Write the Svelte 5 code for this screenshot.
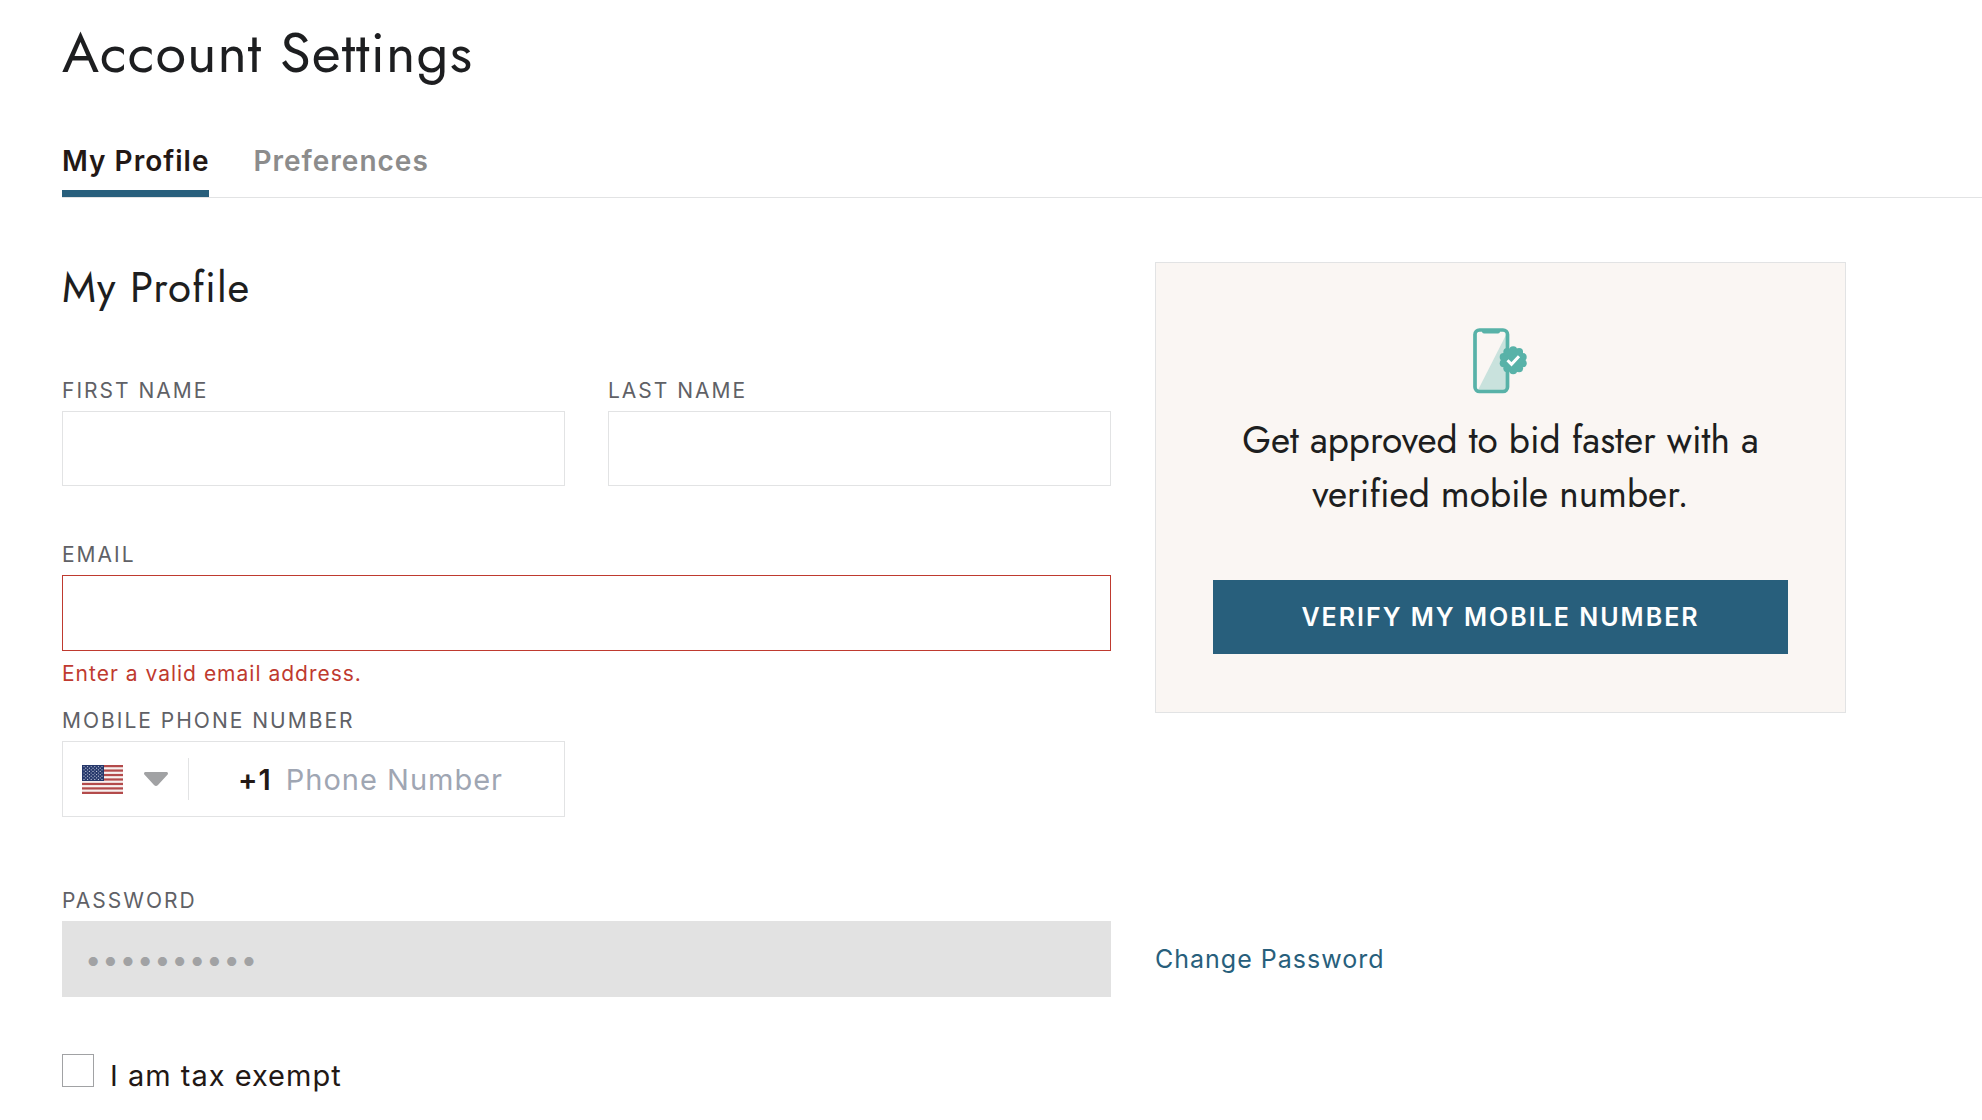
<script>
  let firstName = $state('');
  let lastName = $state('');
  let email = $state('');
  let phone = $state('');
  let taxExempt = $state(false);
  let tab = $state('My Profile');

  const tabs = ['My Profile', 'Preferences'];
  const stripes = [0, 1, 2, 3, 4, 5, 6];
  const starRows = Array.from({ length: 9 }, (_, row) =>
    Array.from({ length: row % 2 ? 5 : 6 }, (_, i) => ({
      x: 2 + i * 3.6 + (row % 2 ? 1.8 : 0),
      y: 1.6 + row * 1.6
    }))
  ).flat();
  const scallops = Array.from({ length: 10 }, (_, i) => ({
    cx: 40.2 + 10 * Math.cos((i * Math.PI) / 5 - Math.PI / 2),
    cy: 32.2 + 10 * Math.sin((i * Math.PI) / 5 - Math.PI / 2)
  }));
</script>

<main class="page">
  <h1>Account Settings</h1>

  <nav class="tabs" aria-label="Account settings">
    {#each tabs as name}
      <button type="button" class="tab" class:active={tab === name} onclick={() => (tab = name)}>{name}</button>
    {/each}
  </nav>

  <form class="form">
    <div class="columns">
      <section class="fields">
        <h2>My Profile</h2>
        <div class="pair">
          <div class="field">
            <label for="first">FIRST NAME</label>
            <input id="first" class="box" type="text" bind:value={firstName} />
          </div>
          <div class="field">
            <label for="last">LAST NAME</label>
            <input id="last" class="box" type="text" bind:value={lastName} />
          </div>
        </div>
        <div class="field spaced">
          <label for="email">EMAIL</label>
          <input id="email" class="box invalid" type="email" aria-invalid="true" aria-describedby="email-error" bind:value={email} />
          <p id="email-error" class="error">Enter a valid email address.</p>
        </div>
        <div class="pair">
          <div class="field">
            <label for="phone">MOBILE PHONE NUMBER</label>
            <div class="box phone">
              <button type="button" class="country" aria-label="Country: United States">
                <svg class="flag" viewBox="0 0 41 29" width="41" height="29" aria-hidden="true">
                  <rect width="41" height="29" fill="#f7f1f0" />
                  {#each stripes as s}
                    <rect y={s * 4.46} width="41" height="2.23" fill="#b34a4b" />
                  {/each}
                  <rect width="22" height="16" fill="#26386b" />
                  {#each starRows as star}
                    <circle cx={star.x} cy={star.y} r="0.6" fill="#c9cfdf" />
                  {/each}
                </svg>
                <svg class="caret" viewBox="0 0 24 14" width="24" height="14" aria-hidden="true">
                  <path d="M1.6 0h20.8c1.6 0 2.1 1.7 1 2.8L14 13q-2 1.8-4 0L.6 2.8C-.5 1.7 0 0 1.6 0z" fill="#a1a2a4" />
                </svg>
              </button>
              <span class="prefix">+1</span>
              <input id="phone" type="tel" placeholder="Phone Number" bind:value={phone} />
            </div>
          </div>
        </div>
      </section>

      <aside class="card">
        <svg viewBox="0 0 56 66" width="56" height="66" aria-hidden="true">
          <path d="M34 5L5 62h26q3 0 3-3z" fill="#c9e2dd" />
          <rect x="2" y="2" width="32.5" height="61.5" rx="4.5" fill="none" stroke="#58b2a8" stroke-width="3.7" />
          <path d="M9 1h18v2.5q0 2-2 2H11q-2 0-2-2z" fill="#58b2a8" />
          <g fill="#58b2a8">
            <circle cx="40.2" cy="32.2" r="11.5" />
            {#each scallops as c}
              <circle cx={c.cx} cy={c.cy} r="4" />
            {/each}
          </g>
          <path d="M34.5 32.3l4 4 7.5-8" fill="none" stroke="#fff" stroke-width="3" />
        </svg>
        <p>Get approved to bid faster with a verified mobile number.</p>
        <button type="button" class="verify">VERIFY MY MOBILE NUMBER</button>
      </aside>
    </div>

    <div class="columns password-row">
      <div class="field">
        <label for="password">PASSWORD</label>
        <input id="password" class="box locked" type="password" value="0123456789" disabled />
      </div>
      <a class="change" href="#change-password">Change Password</a>
    </div>

    <div class="check">
      <input id="tax" type="checkbox" bind:checked={taxExempt} />
      <label for="tax">I am tax exempt</label>
    </div>
  </form>
</main>

<style>
  :global(body) {
    margin: 0;
    background: #fff;
  }

  .page,
  .page * {
    box-sizing: border-box;
  }

  .page {
    padding: 21px 0 32px 62px;
    font-family: Inter, 'Liberation Sans', sans-serif;
    font-size: 29px;
    letter-spacing: 1px;
    color: #231815;
  }

  button,
  input {
    font: inherit;
    letter-spacing: inherit;
    color: inherit;
    margin: 0;
  }

  h1,
  h2,
  p {
    margin: 0;
  }

  h1,
  h2,
  .card p {
    font-family: Jost, Lato, sans-serif;
    font-weight: 400;
    color: #1d1e20;
  }

  h1 {
    font-size: 56px;
    line-height: 64px;
  }

  h2 {
    font-size: 42px;
    line-height: 52px;
    margin-bottom: 61px;
  }

  .tabs {
    display: flex;
    gap: 44px;
    margin-top: 58px;
    border-bottom: 1px solid #e2e3e4;
  }

  .tab {
    padding: 0 0 11px;
    border: 0;
    border-bottom: 7px solid transparent;
    background: none;
    font-size: 28px;
    font-weight: 600;
    line-height: 36px;
    color: #8c8c8c;
    cursor: pointer;
  }

  .tab.active {
    color: #231815;
    border-bottom-color: #285f7c;
  }

  .form {
    padding: 64px 136px 0 0;
  }

  .columns {
    display: grid;
    grid-template-columns: minmax(0, 1049fr) minmax(0, 691fr);
    column-gap: 44px;
    align-items: start;
  }

  .pair {
    display: grid;
    grid-template-columns: repeat(2, minmax(0, 1fr));
    column-gap: 43px;
  }

  .field {
    display: flex;
    flex-direction: column;
  }

  .spaced {
    padding: 53px 0 14px;
  }

  .field label {
    font-size: 21px;
    line-height: 32px;
    letter-spacing: 2px;
    margin-bottom: 4px;
    color: #606166;
  }

  .box {
    width: 100%;
    height: 76px;
    padding: 0 22px;
    border: 1px solid #e2e3e4;
    border-radius: 0;
    background: #fff;
  }

  .pair input.box {
    height: 75px;
  }

  .box.invalid {
    border-color: #bf3a2f;
  }

  .error {
    margin-top: 6px;
    font-size: 21px;
    line-height: 34px;
    color: #bf3a2f;
  }

  .phone {
    display: flex;
    align-items: center;
    padding: 0 19px;
  }

  .country {
    display: flex;
    align-items: center;
    gap: 21px;
    height: 42px;
    padding: 0 20px 0 0;
    border: 0;
    border-right: 1px solid #e2e3e4;
    background: none;
    cursor: pointer;
  }

  .prefix {
    margin: 0 14px 0 49px;
    font-weight: 600;
  }

  .phone input {
    flex: 1;
    min-width: 0;
    padding: 0;
    border: 0;
    background: none;
    outline: none;
  }

  .phone input::placeholder {
    color: #9fa6b3;
    opacity: 1;
  }

  .card {
    display: flex;
    flex-direction: column;
    align-items: center;
    padding: 65px 57px 58px;
    border: 1px solid #e2e3e4;
    background: #faf6f3;
  }

  .card p {
    margin: 19px 0 59px;
    font-size: 37px;
    line-height: 54px;
    letter-spacing: 0;
    text-align: center;
  }

  .verify {
    width: 100%;
    height: 74px;
    border: 0;
    background: #285f7c;
    color: #fff;
    font-size: 25px;
    font-weight: 600;
    letter-spacing: 2px;
    cursor: pointer;
  }

  .password-row {
    margin-top: 68px;
    align-items: end;
  }

  .box.locked {
    background: #e2e2e2;
    border-color: #e2e2e2;
    color: #a1a2a4;
  }

  .change {
    font-size: 25px;
    line-height: 76px;
    color: #285f7c;
    text-decoration: none;
    justify-self: start;
  }

  .check {
    display: flex;
    align-items: flex-start;
    gap: 16px;
    margin-top: 57px;
  }

  .check input {
    appearance: none;
    flex: none;
    width: 32px;
    height: 33px;
    border: 1px solid #a1a2a4;
    background: #fff;
  }

  .check input:checked {
    background: #285f7c;
  }

  .check label {
    padding-top: 4px;
    line-height: 36px;
  }
</style>
